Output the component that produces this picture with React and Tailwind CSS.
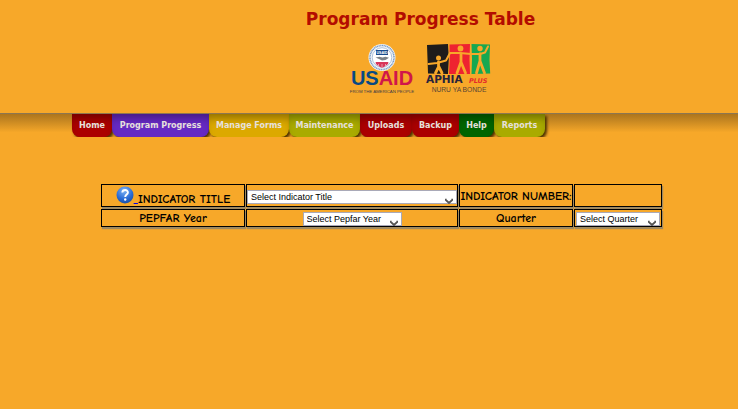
import React from "react";

const tabs = [
  { label: "Home", tone: "bg-[#ab0000]", width: "w-10" },
  { label: "Program Progress", tone: "bg-[#6629c4]", width: "w-[97px]" },
  { label: "Manage Forms", tone: "bg-[#dca900]", width: "w-20" },
  { label: "Maintenance", tone: "bg-[#a9ab00]", width: "w-[71px]" },
  { label: "Uploads", tone: "bg-[#ab0000]", width: "w-[52px]" },
  { label: "Backup", tone: "bg-[#ab0000]", width: "w-[47px]" },
  { label: "Help", tone: "bg-[#006500]", width: "w-[35px]" },
  { label: "Reports", tone: "bg-[#a9ab00]", width: "w-[51px]" },
];

function UsaidLogo() {
  return (
    <svg className="h-12 w-[62px] overflow-visible" viewBox="0 0 62 48" role="img" aria-label="USAID">
      <circle cx="31" cy="13.5" r="13.5" fill="#f5f7fa" />
      <circle cx="31" cy="13.5" r="12" fill="none" stroke="#7f9fc5" strokeWidth="1.6" strokeDasharray="1.2 .5" />
      <circle cx="31" cy="13.5" r="9.8" fill="#fff" stroke="#8ba8ca" strokeWidth=".7" />
      <path d="M25 6h12v5H25z" fill="#184a8c" />
      <text x="31" y="9.8" textAnchor="middle" fontSize="3.6" fontWeight="700" fill="#fff" fontFamily="Liberation Sans, sans-serif">USAID</text>
      <path d="M24.5 13.5l4-.8 3 .8 3-.8 3.500 1-3.500 2.300-3.500.5-3-1.500z" fill="#7c8288" />
      <path d="M24.700 18h12.600v1.600c-1 2-4 3.200-6.300 4.400-2.300-1.200-5.300-2.400-6.300-4.400z" fill="#d8365a" />
      <path d="M27.500 20v2M31 20v4M34.500 20v2" stroke="#fff" strokeWidth=".5" />
      <text x="31" y="41" textAnchor="middle" fontSize="20" fontWeight="700" fontFamily="Liberation Sans, sans-serif" fill="#074a83">
        US<tspan fill="#d0174a">AID</tspan>
      </text>
      <text x="31" y="48.500" textAnchor="middle" fontSize="4.300" fontFamily="Liberation Sans, sans-serif" fill="#3d3a48">FROM THE AMERICAN PEOPLE</text>
    </svg>
  );
}

function AphiaLogo() {
  return (
    <svg className="h-12 w-16 overflow-visible" viewBox="0 0 64 48" role="img" aria-label="APHIA plus Nuru ya Bonde">
      <path d="M0 1l21-1 .8 15L21 30 1 29.500 .5 15z" fill="#1f1c1b" />
      <path d="M22.500.5L43 0l-.5 15 .5 15H22l.7-15z" fill="#ee2330" />
      <path d="M44.500 0L63 .5l-.5 15 .7 14-18.700.5.500-15z" fill="#16a851" />
      <g fill="none" stroke="#f7a82a" strokeLinecap="round" strokeLinejoin="round">
        <path d="M1.500 20l8.500-1 9-2.500 4-7.500 10 0 11 1 9 0 5-1.500 3-6" strokeWidth="2" />
        <path d="M11.500 18v5l-3 6M11.500 22l3.500 7M34 10v8l-4 11M34 18l4.500 11M53 10v7l-3.500 12M53 17l4.500 12" strokeWidth="2.800" />
      </g>
      <g fill="#f7a82a">
        <circle cx="11.500" cy="14" r="2.500" />
        <circle cx="33.500" cy="4.500" r="2.900" />
        <circle cx="53" cy="4.500" r="2.700" />
      </g>
      <text x="-1" y="38.500" fontSize="10.500" fontWeight="700" fontFamily="DejaVu Sans, sans-serif" fill="#28233b">APHIA</text>
      <text x="42" y="38.500" fontSize="6.500" fontWeight="700" fontStyle="italic" fontFamily="DejaVu Sans, sans-serif" fill="#e52b2b">PLUS</text>
      <text x="32" y="47.500" textAnchor="middle" fontSize="6.700" fontFamily="Liberation Sans, sans-serif" fill="#584536">NURU YA BONDE</text>
    </svg>
  );
}

function HelpIcon() {
  return (
    <svg className="h-[18px] w-[18px]" viewBox="0 0 18 18" aria-hidden="true">
      <defs>
        <radialGradient id="orb" cx=".45" cy=".25" r=".8">
          <stop offset="0" stopColor="#7fb4f3" />
          <stop offset=".6" stopColor="#2b6cd6" />
          <stop offset="1" stopColor="#164a9f" />
        </radialGradient>
      </defs>
      <circle cx="9" cy="9" r="8.500" fill="url(#orb)" />
      <path d="M6.300 6.500C6.500 3.200 12 3.200 11.900 6.500 11.900 8.500 9.200 8.700 9.200 11" fill="none" stroke="#fff" strokeWidth="1.900" />
      <circle cx="9.200" cy="13.500" r="1.200" fill="#fff" />
    </svg>
  );
}

function Picker({ label, className }) {
  return (
    <span className={`relative inline-block align-middle ${className}`}>
      <select
        aria-label={label}
        className="block h-[14px] w-full appearance-none border border-[#a9a9b8] bg-white pl-[3px] font-['Liberation_Sans',Arial,sans-serif] text-[9px] leading-3 font-normal text-black"
      >
        <option>{label}</option>
      </select>
      <svg className="pointer-events-none absolute right-1 bottom-0 h-[6px] w-2" viewBox="0 0 8 6" aria-hidden="true">
        <path d="M.8.8v1.200L4 5l3.200-3V.8" fill="none" stroke="#555" strokeWidth="1.800" />
      </svg>
    </span>
  );
}

const cell = "border border-black p-0 shadow-[1px_2px_1px_#a08a60]";

export default function App() {
  return (
    <div className="min-h-screen bg-[#f7a829] font-['DejaVu_Sans',Verdana,sans-serif]">
      <header className="flex h-[113px] flex-col items-center pt-[7px] pl-[103px]">
        <h1 className="text-[17px] leading-6 font-bold text-[#b30c00]">Program Progress Table</h1>
        <div className="mt-[13px] flex gap-[14px]">
          <UsaidLogo />
          <AphiaLogo />
        </div>
      </header>

      <nav className="h-6 overflow-hidden border-t border-[#8d7650] bg-linear-to-b from-[#ac751d] to-[#f7a829] to-80% pl-[72px]">
        <ul className="flex">
          {tabs.map((tab) => (
            <li key={tab.label} className={`shrink-0 ${tab.width}`}>
              <a
                href="#"
                className={`flex h-[23px] items-center justify-center rounded-b-lg text-[8px] font-bold whitespace-nowrap text-[#e6e0dc] shadow-[2px_2px_3px_#4a3000,inset_0_8px_8px_-4px_rgba(0,0,0,0.35)] ${tab.tone}`}
              >
                {tab.label}
              </a>
            </li>
          ))}
        </ul>
      </nav>

      <main className="pt-[45px] pr-[75px] pl-[100px]">
        <table className="w-full table-fixed border-separate border-spacing-x-px border-spacing-y-[2px] text-center font-['Comic_Sans_MS','Comic_Neue',Lato,sans-serif] text-[12px] leading-4 font-bold text-black">
          <colgroup>
            <col className="w-[144px]" />
            <col />
            <col className="w-[114px]" />
            <col className="w-[88px]" />
          </colgroup>
          <tbody>
            <tr className="h-[23px]">
              <th className={cell}>
                <span className="flex items-end justify-center">
                  <a href="#" aria-label="Indicator help" className="flex items-end pb-[2px] text-[#0000ee] underline">
                    <HelpIcon />
                    <span className="whitespace-pre leading-3"> </span>
                  </a>
                  <span className="pb-px leading-3">INDICATOR TITLE</span>
                </span>
              </th>
              <td className={cell}>
                <Picker label="Select Indicator Title" className="w-[210px]" />
              </td>
              <th className={`${cell} whitespace-nowrap`}>INDICATOR NUMBER:</th>
              <td className={cell}></td>
            </tr>
            <tr className="h-[18px]">
              <th className={cell}>PEPFAR Year</th>
              <td className={cell}>
                <Picker label="Select Pepfar Year" className="w-[99px]" />
              </td>
              <th className={cell}>Quarter</th>
              <td className={cell}>
                <Picker label="Select Quarter" className="w-[84px]" />
              </td>
            </tr>
          </tbody>
        </table>
      </main>
    </div>
  );
}
